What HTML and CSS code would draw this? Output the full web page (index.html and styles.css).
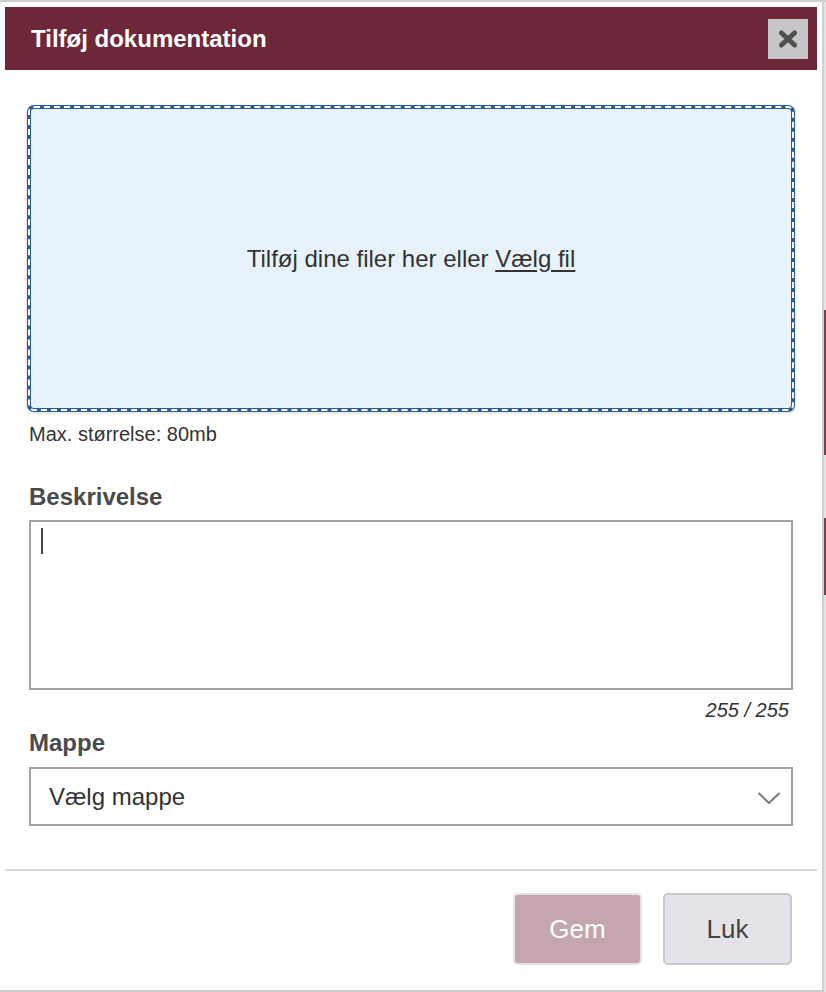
FILE: index.html
```html
<!DOCTYPE html>
<html lang="da">
<head>
<meta charset="utf-8">
<title>Tilføj dokumentation</title>
<link rel="stylesheet" href="styles.css">
</head>
<body>
<div class="page">
  <div class="modal">
    <div class="modal-header">
      <h1 class="modal-title">Tilføj dokumentation</h1>
      <button class="close-btn" aria-label="Luk">
        <svg width="20" height="18" viewBox="0 0 20 18"><path d="M3.5 3 L16.5 15 M16.5 3 L3.5 15" stroke="#4f4f4f" stroke-width="5" stroke-linecap="round" fill="none"/></svg>
      </button>
    </div>
    <div class="modal-body">
      <div class="dropzone">
        <span>Tilføj dine filer her eller <span class="link">Vælg fil</span></span>
      </div>
      <div class="hint">Max. størrelse: 80mb</div>
      <label class="field-label">Beskrivelse</label>
      <div class="textarea"><span class="caret"></span></div>
      <div class="counter">255 / 255</div>
      <label class="field-label label-mappe">Mappe</label>
      <div class="select">
        <span>Vælg mappe</span>
        <svg class="chevron" width="24" height="12" viewBox="0 0 24 12"><path d="M1.5 1 L12 11 L22.5 1" stroke="#7a7a7a" stroke-width="2" fill="none"/></svg>
      </div>
    </div>
    <div class="modal-footer">
      <button class="btn btn-save">Gem</button>
      <button class="btn btn-close">Luk</button>
    </div>
  </div>
  <div class="edge">
    <div class="seg seg-gray s1"></div>
    <div class="seg seg-red s2"></div>
    <div class="seg seg-gray s3"></div>
    <div class="seg seg-red s4"></div>
    <div class="seg seg-gray s5"></div>
  </div>
</div>
</body>
</html>
```

FILE: styles.css
```css
* { box-sizing: border-box; }
html, body { margin: 0; padding: 0; background: #fff; }
body {
  font-family: "Liberation Sans", Arial, Helvetica, sans-serif;
  color: #333;
  width: 826px;
  height: 992px;
  overflow: hidden;
}
.page {
  display: flex;
  border-top: 2px solid #cfcfcf;
  height: 992px;
}
.modal {
  width: 824px;
  flex: none;
  padding: 5px 5px 0 5px;
  border-right: 2px solid #d0d0d0;
  border-bottom: 2px solid #cbcbcb;
  display: flex;
  flex-direction: column;
}
.modal-header {
  height: 63px;
  background: #6d2739;
  display: flex;
  align-items: center;
  justify-content: space-between;
  padding: 0 9px 0 26px;
}
.modal-title {
  margin: 0;
  font-size: 24px;
  font-weight: bold;
  color: #fff;
  line-height: 28px;
}
.close-btn {
  width: 40px;
  height: 40px;
  border: none;
  background: #c6c6c6;
  padding: 0;
  display: flex;
  align-items: center;
  justify-content: center;
  margin-top: 1px;
}
.modal-body {
  padding: 35px 24px 0 24px;
  display: flex;
  flex-direction: column;
}
.dropzone {
  height: 307px;
  margin: 0 -2px;
  background: #e8f2fc;
  border: 4px solid #2c5d92;
  border-radius: 7px;
  outline: 2px dashed #ffffff;
  outline-offset: -3px;
  box-shadow: 0 1px 2px 1px rgba(0,0,0,0.10);
  display: flex;
  align-items: center;
  justify-content: center;
  font-size: 24px;
  line-height: 28px;
  color: #333;
}
.link { text-decoration: underline; text-underline-offset: 3px; }
.hint {
  margin-top: 10px;
  font-size: 20px;
  line-height: 24px;
  color: #333;
}
.field-label {
  display: block;
  margin-top: 37px;
  font-size: 24px;
  font-weight: bold;
  line-height: 28px;
  color: #4a4a4a;
}
.label-mappe { margin-top: 7px; }
.textarea {
  margin-top: 9px;
  height: 170px;
  border: 2px solid #a3a3a3;
  background: #fff;
  padding: 6px 10px;
}
.caret {
  display: block;
  width: 2px;
  height: 26px;
  background: #444;
}
.counter {
  margin-top: 8px;
  text-align: right;
  padding-right: 4px;
  font-size: 20px;
  line-height: 24px;
  font-style: italic;
  color: #333;
}
.select {
  margin-top: 10px;
  height: 59px;
  border: 2px solid #a3a3a3;
  display: flex;
  align-items: center;
  justify-content: space-between;
  padding: 0 10px 0 18px;
  font-size: 24px;
  color: #333;
}
.chevron { margin-top: 2px; }
.modal-footer {
  margin-top: 43px;
  border-top: 2px solid #dadada;
  padding: 22px 25px 25px 25px;
  display: flex;
  justify-content: flex-end;
  gap: 21px;
}
.btn {
  width: 129px;
  height: 72px;
  border-radius: 5px;
  font-family: "Liberation Sans", Arial, sans-serif;
  font-size: 26px;
  padding: 0;
}
.btn-save {
  background: #c5a6ae;
  border: 2px solid #e7e3e5;
  color: #fff;
}
.btn-close {
  background: #e4e3e9;
  border: 2px solid #c9c9cd;
  color: #444;
}
.edge {
  width: 2px;
  flex: none;
  display: flex;
  flex-direction: column;
}
.seg { width: 100%; }
.seg-gray { background: #e4e4e4; }
.seg-red { background: #7b3f50; }
.s1 { height: 308px; }
.s2 { height: 145px; }
.s3 { height: 63px; }
.s4 { height: 77px; }
.s5 { flex: 1; }
```
